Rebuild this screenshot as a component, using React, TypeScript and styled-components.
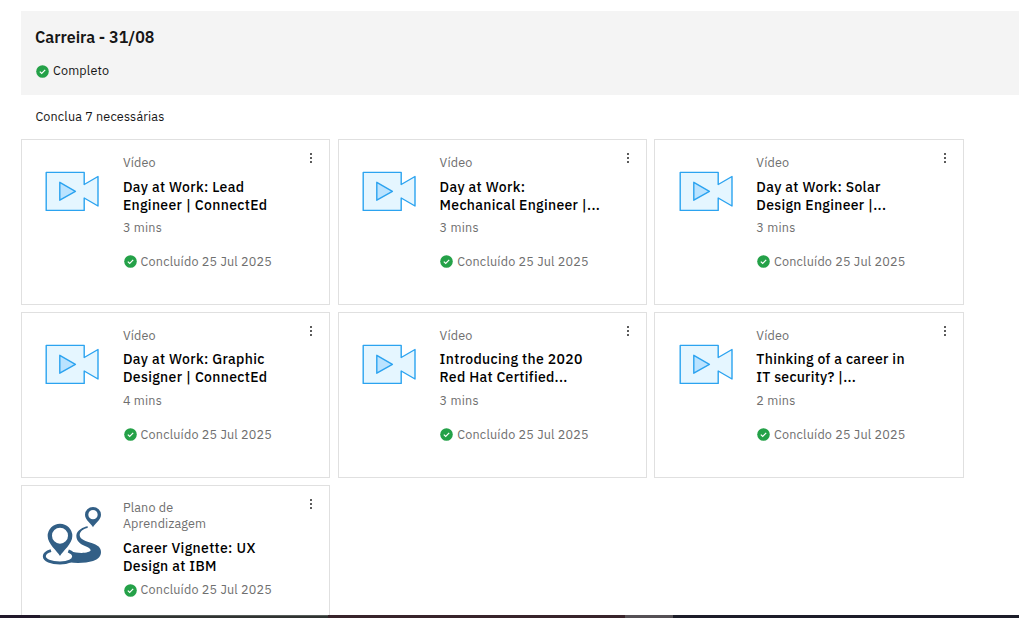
import React from "react";
import styled, { createGlobalStyle } from "styled-components";

const GlobalStyle = createGlobalStyle`
  * { box-sizing: border-box; }
  html, body { margin: 0; background: #fff; overflow: hidden; }
  body { font-family: "IBM Plex Sans", Roboto, "Liberation Sans", sans-serif; color: #161616; }
`;

const Page = styled.div`
  height: 618px;
  display: flex;
  flex-direction: column;
  padding-top: 11px;
  overflow: hidden;
`;

const Content = styled.main`
  flex: 1;
  min-height: 0;
  overflow: hidden;
  padding-left: 21px;
`;

const Header = styled.header`
  height: 84px;
  padding: 15px 14px 0;
  background: #f4f4f4;
`;

const Text = styled.span<{ $track?: number }>`
  letter-spacing: ${(p) => p.$track ?? 0}px;
  white-space: nowrap;
`;

const Heading = styled.h1`
  margin: 0 0 13px;
  font-size: 16px;
  line-height: 22px;
  font-weight: 600;
`;

const Status = styled.div`
  display: flex;
  align-items: center;
  gap: 4.4px;
  padding-left: 0.6px;
  height: 18px;
  font-size: 12.6px;
  line-height: 18px;
  svg { margin-top: 2px; }
`;

const Requirement = styled.p`
  margin: 0;
  padding: 12px 14.4px 0;
  height: 44.4px;
  font-size: 12.6px;
  line-height: 18px;
`;

const Grid = styled.section`
  width: 942.7px;
  display: grid;
  grid-template-columns: repeat(3, 1fr);
  grid-auto-rows: 165.5px;
  gap: 7.3px 7.5px;
`;

const Card = styled.article`
  display: grid;
  grid-template-columns: 100.9px 1fr 37px;
  border: 1px solid #e0e0e0;
  background: #fff;
`;

const IconCell = styled.div<{ $plan?: boolean }>`
  padding: ${(p) => (p.$plan ? "14px 0 0 13px" : "30px 0 0 22.3px")};
  svg { display: block; }
`;

const Details = styled.div`
  padding-top: 13.35px;
  color: #6f6f6f;
  font-size: 12.6px;
`;

const Kind = styled.div`
  line-height: 16px;
  margin-bottom: 7.85px;
`;

const Title = styled.h2`
  margin: 0 0 5.15px;
  font-size: 14px;
  line-height: 18px;
  font-weight: 500;
  color: #000;
`;

const Duration = styled.div`
  line-height: 16px;
  margin-bottom: 17px;
`;

const Completed = styled.div`
  display: flex;
  align-items: center;
  gap: 4px;
  padding-left: 0.7px;
  height: 18px;
  line-height: 18px;
  svg { margin-top: 2.4px; }
`;

const MenuButton = styled.button`
  align-self: start;
  justify-self: center;
  margin: 12px 0 0 1.2px;
  padding: 0;
  border: 0;
  background: none;
  width: 12px;
  height: 12px;
  svg { display: block; }
`;

const Taskbar = styled.footer`
  display: grid;
  grid-template-columns: 40px 288px 297px 48px 1fr;
  height: 3px;
`;

const Segment = styled.div<{ $color: string; $edge?: string }>`
  background: ${(p) => p.$color};
  border-top: ${(p) => (p.$edge ? `1px solid ${p.$edge}` : "0")};
`;

const Check = () => (
  <svg width="13" height="13" viewBox="0 0 13 13">
    <circle cx="6.5" cy="6.5" r="6.3" fill="#24a148" />
    <path d="M3.8 6.6 5.7 8.4 9.2 4.9" fill="none" stroke="#fff" strokeWidth="1.2" />
  </svg>
);

const Dots = () => (
  <svg width="12" height="12" viewBox="0 0 12 12" fill="#161616">
    <circle cx="6" cy="2" r="0.95" />
    <circle cx="6" cy="6" r="0.95" />
    <circle cx="6" cy="10" r="0.95" />
  </svg>
);

const VideoIcon = () => (
  <svg width="56" height="42" viewBox="0 0 56 42" fill="#e5f6ff" stroke="#2ba3f0" strokeWidth="1.4" strokeLinejoin="round">
    <path d="M2.2 2.4H40.2V14.5L54 6.5V36L40.2 28V40.4H2.2Z" />
    <path d="M15.8 12.3V30.2L31.4 21.3Z" fill="#bae3ff" />
  </svg>
);

const PlanIcon = () => (
  <svg width="75" height="70" viewBox="0 0 225 210" fill="#325f86">
    <path fillRule="evenodd" d="M75 168C67 153 38 132 38 108A37 37 0 0 1 112 108C112 132 83 153 75 168ZM75 83A24 24 0 1 0 75 131A24 24 0 1 0 75 83Z" />
    <path fillRule="evenodd" d="M174 82C170 71 150 60 150 44A24 23 0 0 1 198 44C198 60 178 71 174 82ZM174 30A14 14 0 1 0 174 58A14 14 0 1 0 174 30Z" />
    <path d="M158 79C146 81 124 91 124 107C124 124 137 132 150 138C160 142 167 146 167 151C166 159 132 162 107 154C118 161 121 171 113 178C110 182 107 184 102 187C126 190 155 189 174 183C190 178 198 169 198 156C198 142 188 136 172 130C153 123 134 119 134 105C134 94 147 86 158 84Z" />
    <path d="M48 152C34 156 28 162 28 169C28 181 48 189 75 189C100 189 116 181 116 169C116 161 110 157 100 153" fill="none" stroke="#325f86" strokeWidth="9" />
  </svg>
);

type Line = [text: string, tracking: number];
interface Item { kind: Line[]; title: Line[]; duration?: string }

const video: Line[] = [["Vídeo", 0.15]];
const items: Item[] = [
  { kind: video, title: [["Day at Work: Lead", 0.34], ["Engineer | ConnectEd", 0.34]], duration: "3 mins" },
  { kind: video, title: [["Day at Work:", 0.34], ["Mechanical Engineer |...", 0.31]], duration: "3 mins" },
  { kind: video, title: [["Day at Work: Solar", 0.34], ["Design Engineer |...", 0.3]], duration: "3 mins" },
  { kind: video, title: [["Day at Work: Graphic", 0.34], ["Designer | ConnectEd", 0.34]], duration: "4 mins" },
  { kind: video, title: [["Introducing the 2020", 0.34], ["Red Hat Certified...", 0.3]], duration: "3 mins" },
  { kind: video, title: [["Thinking of a career in", 0.31], ["IT security? |...", 0.25]], duration: "2 mins" },
  { kind: [["Plano de", 0.15], ["Aprendizagem", 0.15]], title: [["Career Vignette: UX", 0.36], ["Design at IBM", 0.34]] },
];

const Lines = ({ lines }: { lines: Line[] }) => (
  <>
    {lines.map(([text, track]) => (
      <div key={text}><Text $track={track}>{text}</Text></div>
    ))}
  </>
);

const CourseCard = ({ item }: { item: Item }) => (
  <Card>
    <IconCell $plan={!item.duration}>{item.duration ? <VideoIcon /> : <PlanIcon />}</IconCell>
    <Details>
      <Kind><Lines lines={item.kind} /></Kind>
      <Title><Lines lines={item.title} /></Title>
      {item.duration && <Duration><Text $track={0.2}>{item.duration}</Text></Duration>}
      <Completed><Check /><Text $track={0.18}>Concluído 25 Jul 2025</Text></Completed>
    </Details>
    <MenuButton aria-label="Opções"><Dots /></MenuButton>
  </Card>
);

export default function App() {
  return (
    <>
      <GlobalStyle />
      <Page>
        <Content>
          <Header>
            <Heading><Text>Carreira - 31/08</Text></Heading>
            <Status><Check /><Text $track={0.16}>Completo</Text></Status>
          </Header>
          <Requirement><Text $track={0.15}>Conclua 7 necessárias</Text></Requirement>
          <Grid>{items.map((item) => <CourseCard key={item.title[0][0] + item.title[1][0]} item={item} />)}</Grid>
        </Content>
        <Taskbar>
          <Segment $color="#21182a" />
          <Segment $color="#303432" $edge="#555b58" />
          <Segment $color="#38232a" />
          <Segment $color="#555055" />
          <Segment $color="#1c1d29" />
        </Taskbar>
      </Page>
    </>
  );
}
